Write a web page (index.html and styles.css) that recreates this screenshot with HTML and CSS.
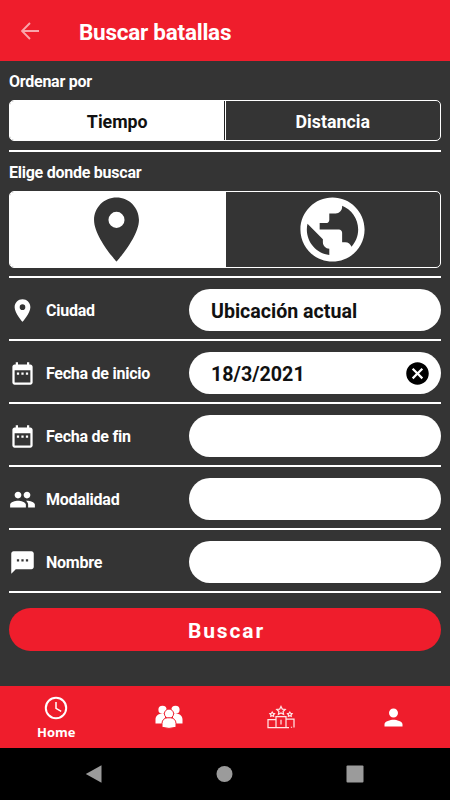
FILE: index.html
```html
<!DOCTYPE html>
<html lang="es">
<head>
<meta charset="utf-8">
<meta name="viewport" content="width=device-width, initial-scale=1">
<title>Buscar batallas</title>
<link rel="stylesheet" href="styles.css">
</head>
<body>
<header class="header">
  <svg class="back" viewBox="0 0 18 18"><path d="M9 1 1 9l8 8M1 9h17"/></svg>
  <h1 class="title"><span>Buscar batallas</span></h1>
</header>
<main class="content">
  <section class="group order">
    <h2 class="heading">Ordenar por</h2>
    <div class="segments small">
      <button class="segment active">Tiempo</button>
      <button class="segment">Distancia</button>
    </div>
  </section>
  <section class="group where">
    <h2 class="heading">Elige donde buscar</h2>
    <div class="segments large">
      <button class="segment active" aria-label="Cerca"><svg class="big-icon" viewBox="0 0 24 24"><path d="M12 2C8.13 2 5 5.13 5 9c0 5.25 7 13 7 13s7-7.75 7-13c0-3.87-3.13-7-7-7zm0 9.5a2.5 2.5 0 0 1 0-5 2.5 2.5 0 0 1 0 5z"/></svg></button>
      <button class="segment" aria-label="Mundo"><svg class="big-icon" viewBox="0 0 24 24"><path d="M12 2C6.48 2 2 6.48 2 12s4.48 10 10 10 10-4.48 10-10S17.52 2 12 2zm-1 17.93c-3.95-.49-7-3.85-7-7.93 0-.62.08-1.21.21-1.79L9 15v1c0 1.1.9 2 2 2v1.93zm6.9-2.54c-.26-.81-1-1.39-1.9-1.39h-1v-3c0-.55-.45-1-1-1H8v-2h2c.55 0 1-.45 1-1V7h2c1.1 0 2-.9 2-2v-.41c2.93 1.19 5 4.06 5 7.41 0 2.08-.8 3.97-2.1 5.39z"/></svg></button>
    </div>
  </section>
  <div class="row">
    <svg class="icon" viewBox="0 0 24 24"><path d="M12 2C8.13 2 5 5.13 5 9c0 5.25 7 13 7 13s7-7.75 7-13c0-3.87-3.13-7-7-7zm0 9.5a2.5 2.5 0 0 1 0-5 2.5 2.5 0 0 1 0 5z"/></svg>
    <span class="label">Ciudad</span>
    <div class="field"><span class="city">Ubicación actual</span></div>
  </div>
  <div class="row">
    <svg class="icon" viewBox="0 0 24 24"><path d="M9 11H7v2h2v-2zm4 0h-2v2h2v-2zm4 0h-2v2h2v-2zm2-7h-1V2h-2v2H8V2H6v2H5c-1.11 0-1.99.9-1.99 2L3 20c0 1.1.89 2 2 2h14c1.1 0 2-.9 2-2V6c0-1.1-.9-2-2-2zm0 16H5V9h14v11z"/></svg>
    <span class="label">Fecha de inicio</span>
    <div class="field"><span class="date">18/3/2021</span><svg class="icon clear" viewBox="0 0 24 24"><path d="M12 2C6.47 2 2 6.47 2 12s4.47 10 10 10 10-4.47 10-10S17.53 2 12 2zm5 13.59L15.59 17 12 13.41 8.41 17 7 15.59 10.59 12 7 8.41 8.41 7 12 10.59 15.59 7 17 8.41 13.41 12 17 15.59z"/></svg></div>
  </div>
  <div class="row">
    <svg class="icon" viewBox="0 0 24 24"><path d="M9 11H7v2h2v-2zm4 0h-2v2h2v-2zm4 0h-2v2h2v-2zm2-7h-1V2h-2v2H8V2H6v2H5c-1.11 0-1.99.9-1.99 2L3 20c0 1.1.89 2 2 2h14c1.1 0 2-.9 2-2V6c0-1.1-.9-2-2-2zm0 16H5V9h14v11z"/></svg>
    <span class="label">Fecha de fin</span>
    <div class="field"></div>
  </div>
  <div class="row">
    <svg class="icon" viewBox="0 0 24 24"><path d="M16 11c1.66 0 2.99-1.34 2.99-3S17.66 5 16 5s-3 1.34-3 3 1.34 3 3 3zm-8 0c1.66 0 2.99-1.34 2.99-3S9.66 5 8 5 5 6.34 5 8s1.34 3 3 3zm0 2c-2.33 0-7 1.17-7 3.5V19h14v-2.5c0-2.33-4.67-3.5-7-3.5zm8 0c-.29 0-.62.02-.97.05 1.16.84 1.97 1.97 1.97 3.45V19h6v-2.5c0-2.33-4.67-3.5-7-3.5z"/></svg>
    <span class="label">Modalidad</span>
    <div class="field"></div>
  </div>
  <div class="row">
    <svg class="icon" viewBox="0 0 24 24"><path d="M20 2H4c-1.1 0-1.99.9-1.99 2L2 22l4-4h14c1.1 0 2-.9 2-2V4c0-1.1-.9-2-2-2zM9 11H7V9h2v2zm4 0h-2V9h2v2zm4 0h-2V9h2v2z"/></svg>
    <span class="label">Nombre</span>
    <div class="field"></div>
  </div>
  <button class="search">Buscar</button>
</main>
<nav class="tabs">
  <a class="tab home">
    <svg class="clock" viewBox="0 0 24 24"><circle cx="12" cy="12" r="10.2"/><path class="hands" d="M12 6v6.4l5.2 3"/></svg>
    <span>Home</span>
  </a>
  <a class="tab">
    <svg class="team" viewBox="0 0 28 24"><g><circle cx="7.5" cy="4.8" r="4.1"/><circle cx="20.5" cy="4.8" r="4.1"/><path d="M.5 18.5v-4C.5 11 3 9 6 9h4v9.5zM27.5 18.5v-4C27.5 11 25 9 22 9h-4v9.5z"/></g><g class="front"><circle cx="14" cy="8.7" r="4.6"/><path d="M7 22.3v-3.8c0-3.5 2.5-5.7 5.5-5.7h3c3 0 5.500 2.200 5.500 5.700v3.800Q14 24.500 7 22.300z"/></g></svg>
  </a>
  <a class="tab">
    <svg class="podium" viewBox="0 0 28 24"><path d="M1 22.500V14.500h8v8zM9 22.500V11.500h10v11M19 14h8v8.500M9 22.500h13M14 1.500l1.300 2.600 2.900.4-2.100 2 .5 2.900-2.600-1.400-2.600 1.400.5-2.900-2.100-2 2.900-.4zM5.200 7.100l.8 1.200 1.500.3-1 1.200.1 1.500-1.400-.6-1.400.6.1-1.500-1-1.200 1.500-.3zM22.800 7.100l.8 1.200 1.500.3-1 1.200.1 1.500-1.400-.6-1.400.6.100-1.500-1-1.200 1.500-.3zM24.500 21.800v1"/><path d="M14 14.800v4.700"/></svg>
  </a>
  <a class="tab">
    <svg class="icon" viewBox="0 0 24 24"><path d="M12 12c2.210 0 4-1.790 4-4s-1.790-4-4-4-4 1.790-4 4 1.790 4 4 4zm0 2c-2.670 0-8 1.340-8 4v2h16v-2c0-2.660-5.330-4-8-4z"/></svg>
  </a>
</nav>
<footer class="system">
  <svg viewBox="0 0 20 20"><path d="M1.800 10 17.500 1.200v17.600z"/></svg>
  <svg viewBox="0 0 20 20"><circle cx="10.500" cy="10" r="8"/></svg>
  <svg viewBox="0 0 20 20"><rect x="1.500" y="1.500" width="17" height="17" rx="1"/></svg>
</footer>
</body>
</html>
```
FILE: styles.css
```css
* { box-sizing: border-box; }
body {
  margin: 0;
  width: 450px;
  height: 800px;
  display: grid;
  grid-template-rows: 61px 625px 62px 52px;
  overflow: hidden;
  background: #343434;
  color: #fff;
  font-family: Roboto, sans-serif;
  font-weight: 700;
}
button { font: inherit; color: inherit; border: 0; padding: 0; margin: 0; background: none; }
svg { display: block; fill: currentColor; flex: none; }
.header { display: flex; align-items: center; padding-left: 21px; background: #ef1d2c; }
.back { width: 18px; height: 18px; fill: none; stroke: #f9a5ab; stroke-width: 1.900; }
.title { margin: 2px 0 0 40px; font-size: 22.500px; letter-spacing: -.25px; line-height: 28px; font-weight: 700; }
.content { padding: 0 9px; }
.group { border-bottom: 2px solid #fff; }
.order { height: 91px; padding-top: 11px; }
.where { height: 126px; padding-top: 11px; }
.heading { margin: 0; height: 28px; font-size: 16px; letter-spacing: -.25px; line-height: 19px; font-weight: 700; }
.segments { display: flex; height: 41px; border: 1px solid #fff; border-radius: 5px; overflow: hidden; font-size: 17.800px; }
.segments.large { height: 77px; }
.segment { flex: 1; display: flex; align-items: center; justify-content: center; padding-top: 2px; }
.segment.active { background: #fff; color: #111; }
.small .segment + .segment { border-left: 1px solid #fff; box-shadow: -1px 0 #222; }
.large .segment { padding: 0 1px 0 0; }
.large .segment.active { flex: 0 0 216px; padding-right: 3px; color: #343434; }
.big-icon { width: 77px; height: 77px; }
.row { display: flex; align-items: center; height: 63px; border-bottom: 2px solid #fff; padding-top: 3px; }
.icon { width: 27px; height: 27px; }
.row > .icon { margin-left: -.5px; }
.label { width: 143px; margin-left: 10.500px; padding-top: 1px; font-size: 16px; letter-spacing: -.25px; }
.field { flex: 1; height: 42px; border-radius: 21px; background: #fff; color: #111; display: flex; align-items: center; justify-content: space-between; padding: 3px 10px 0 22px; font-size: 19.600px; }
.date { font-size: 19.700px; }
.clear { color: #000; margin-top: -3px; }
.search { display: block; width: 100%; height: 43.500px; margin-top: 14.500px; border-radius: 22px; background: #ef1d2c; font-size: 21px; letter-spacing: 1.900px; padding: 3px 0 0 3px; }
.tabs { display: grid; grid-template-columns: repeat(4, 1fr); background: #ef1d2c; }
.tab { display: flex; flex-direction: column; align-items: center; justify-content: center; }
.home { justify-content: flex-start; padding-top: 10px; font: 700 13px/16px "Open Sans", sans-serif; gap: 4px; }
.clock { width: 24px; height: 24px; fill: none; stroke: #fff; stroke-width: 2; }
.hands { stroke-width: 1.500; }
.team { width: 28px; height: 24px; }
.front { stroke: #ef1d2c; stroke-width: 1; }
.podium { width: 28px; height: 24px; fill: none; stroke: #ffe5e6; stroke-width: 1.250; }
.system { display: flex; align-items: center; justify-content: space-between; padding: 0 85.500px 0 84px; background: #000; }
.system svg { width: 20px; height: 20px; fill: #9b9b9b; }
```
